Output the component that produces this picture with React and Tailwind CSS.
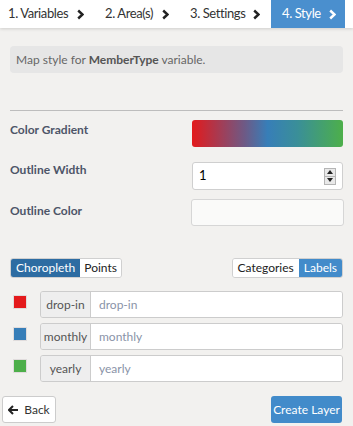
import React from 'react';

const TABS = [
  { label: '1. Variables', w: 'w-[97px] pl-[8px] pr-[13px]' },
  { label: '2. Area(s)', w: 'w-[85px] pl-[8px] pr-[13px]' },
  { label: '3. Settings', w: 'w-[89px] pl-[8px] pr-[11px]' },
  { label: '4. Style', w: 'w-[74px] pl-[11px] pr-[9px]', active: true },
];

const ROWS = [
  { name: 'drop-in', color: 'bg-[#e41a1c]' },
  { name: 'monthly', color: 'bg-[#377eb8]' },
  { name: 'yearly', color: 'bg-[#4daf4a]' },
];

function Chevron({ className }) {
  return (
    <svg width="7" height="11" viewBox="0 0 7 11" className={className}>
      <polyline points="1.2,1.5 5.5,5.5 1.2,9.5" fill="none" stroke="currentColor" strokeWidth="2.4" />
    </svg>
  );
}

export default function App() {
  return (
    <div
      className="w-[353px] h-[426px] bg-[#f2f1ef] text-[12px] flex flex-col overflow-hidden"
      style={{ fontFamily: "Lato, 'Open Sans', sans-serif" }}
    >
      {/* Step tabs */}
      <div className="h-[28px] shrink-0 bg-white flex shadow-[0_1px_3px_rgba(0,0,0,0.15)] relative z-10">
        {TABS.map((t) => (
          <div
            key={t.label}
            className={[
              'flex items-center justify-between h-full text-[13px]',
              t.w,
              t.active ? 'bg-[#4a8fce] text-white' : 'text-[#333]',
            ].join(' ')}
          >
            <span className="whitespace-nowrap tracking-[-0.4px]">{t.label}</span>
            <Chevron className={t.active ? 'text-white' : 'text-[#222]'} />
          </div>
        ))}
      </div>

      <div className="px-[10px] pt-[18px] flex flex-col">
        {/* Info */}
        <div className="bg-[#e6e6e6] rounded-[4px] h-[27px] pl-[6px] flex items-center text-[#666]">
          <span>
            Map style for <b className="font-bold text-[#555]">MemberType</b> variable.
          </span>
        </div>

        <div className="h-px bg-[#bdbdbd] mt-[37px]" />

        {/* Style fields */}
        <div className="flex flex-col text-[#4d5568] font-bold">
          <div className="flex items-center justify-between mt-[9px]">
            <span className="-mt-[8px]">Color Gradient</span>
            <div className="w-[151px] h-[27px] rounded-[3px] bg-[linear-gradient(to_right,#e31a1c_0%,#6d5a86_35%,#377eb8_50%,#3a8f98_70%,#4daf4a_100%)]" />
          </div>
          <div className="flex items-center justify-between mt-[15px]">
            <span className="-mt-[12px]">Outline Width</span>
            <div className="w-[151px] h-[28px] rounded-[3px] bg-white border border-[#cfcfcf] flex items-center pl-[6px] pr-[6px]">
              <span className="flex-1 font-normal text-black text-[13px]">1</span>
              <div className="w-[12px] h-[17px] flex flex-col border border-[#b5b5b5] bg-[#e9e9e9]">
                <div className="flex-1 flex items-center justify-center border-b border-[#b5b5b5]">
                  <svg width="6" height="4" viewBox="0 0 6 4"><polygon points="3,0 6,4 0,4" fill="#222" /></svg>
                </div>
                <div className="flex-1 flex items-center justify-center">
                  <svg width="6" height="4" viewBox="0 0 6 4"><polygon points="0,0 6,0 3,4" fill="#222" /></svg>
                </div>
              </div>
            </div>
          </div>
          <div className="flex items-center justify-between mt-[9px]">
            <span className="-mt-[4px]">Outline Color</span>
            <div className="w-[153px] h-[27px] rounded-[3px] bg-[#fafaf9] border border-[#d6d6d6] -mr-[1px]" />
          </div>
        </div>

        {/* Toggles */}
        <div className="flex items-center justify-between mt-[32px]">
          <div className="flex h-[20px] rounded-[3px] overflow-hidden border border-[#d0d0d0]">
            <div className="bg-[#2d6ca2] text-white px-[5px] flex items-center">Choropleth</div>
            <div className="bg-white text-[#222] px-[4px] flex items-center">Points</div>
          </div>
          <div className="flex h-[20px] rounded-[3px] overflow-hidden border border-[#d0d0d0]">
            <div className="bg-white text-[#222] px-[5px] flex items-center">Categories</div>
            <div className="bg-[#428bca] text-white px-[5px] flex items-center">Labels</div>
          </div>
        </div>

        {/* Category rows */}
        <div className="flex flex-col gap-[5px] mt-[13px]">
          {ROWS.map((r) => (
            <div key={r.name} className="flex items-center">
              <div className="w-[30px] flex items-start self-stretch pt-[4px] pl-[3px]">
                <div className={`w-[12px] h-[12px] ${r.color} border border-[#e0dcdc] box-content`} />
              </div>
              <div className="flex-1 h-[27px] flex rounded-[3px] border border-[#cccccc] overflow-hidden">
                <div className="w-[50px] bg-[#eeeeee] border-r border-[#cccccc] flex items-center justify-center text-[#555]">
                  {r.name}
                </div>
                <div className="flex-1 bg-white flex items-center pl-[8px] text-[#8a93a8]">{r.name}</div>
              </div>
            </div>
          ))}
        </div>
      </div>

      {/* Footer */}
      <div className="flex justify-between items-center mt-auto mb-[3px] pl-[2px] pr-[11px]">
        <button
          type="button"
          className="h-[27px] w-[54px] bg-white border border-[#cccccc] rounded-[3px] flex items-center justify-center gap-[5px] text-[#333]"
        >
          <svg width="11" height="10" viewBox="0 0 11 10">
            <path d="M5 1 L1 5 L5 9 M1 5 H10" fill="none" stroke="#222" strokeWidth="2" />
          </svg>
          Back
        </button>
        <button
          type="button"
          className="h-[27px] w-[71px] bg-[#428bca] rounded-[3px] text-white flex items-center justify-center"
        >
          Create Layer
        </button>
      </div>
    </div>
  );
}
